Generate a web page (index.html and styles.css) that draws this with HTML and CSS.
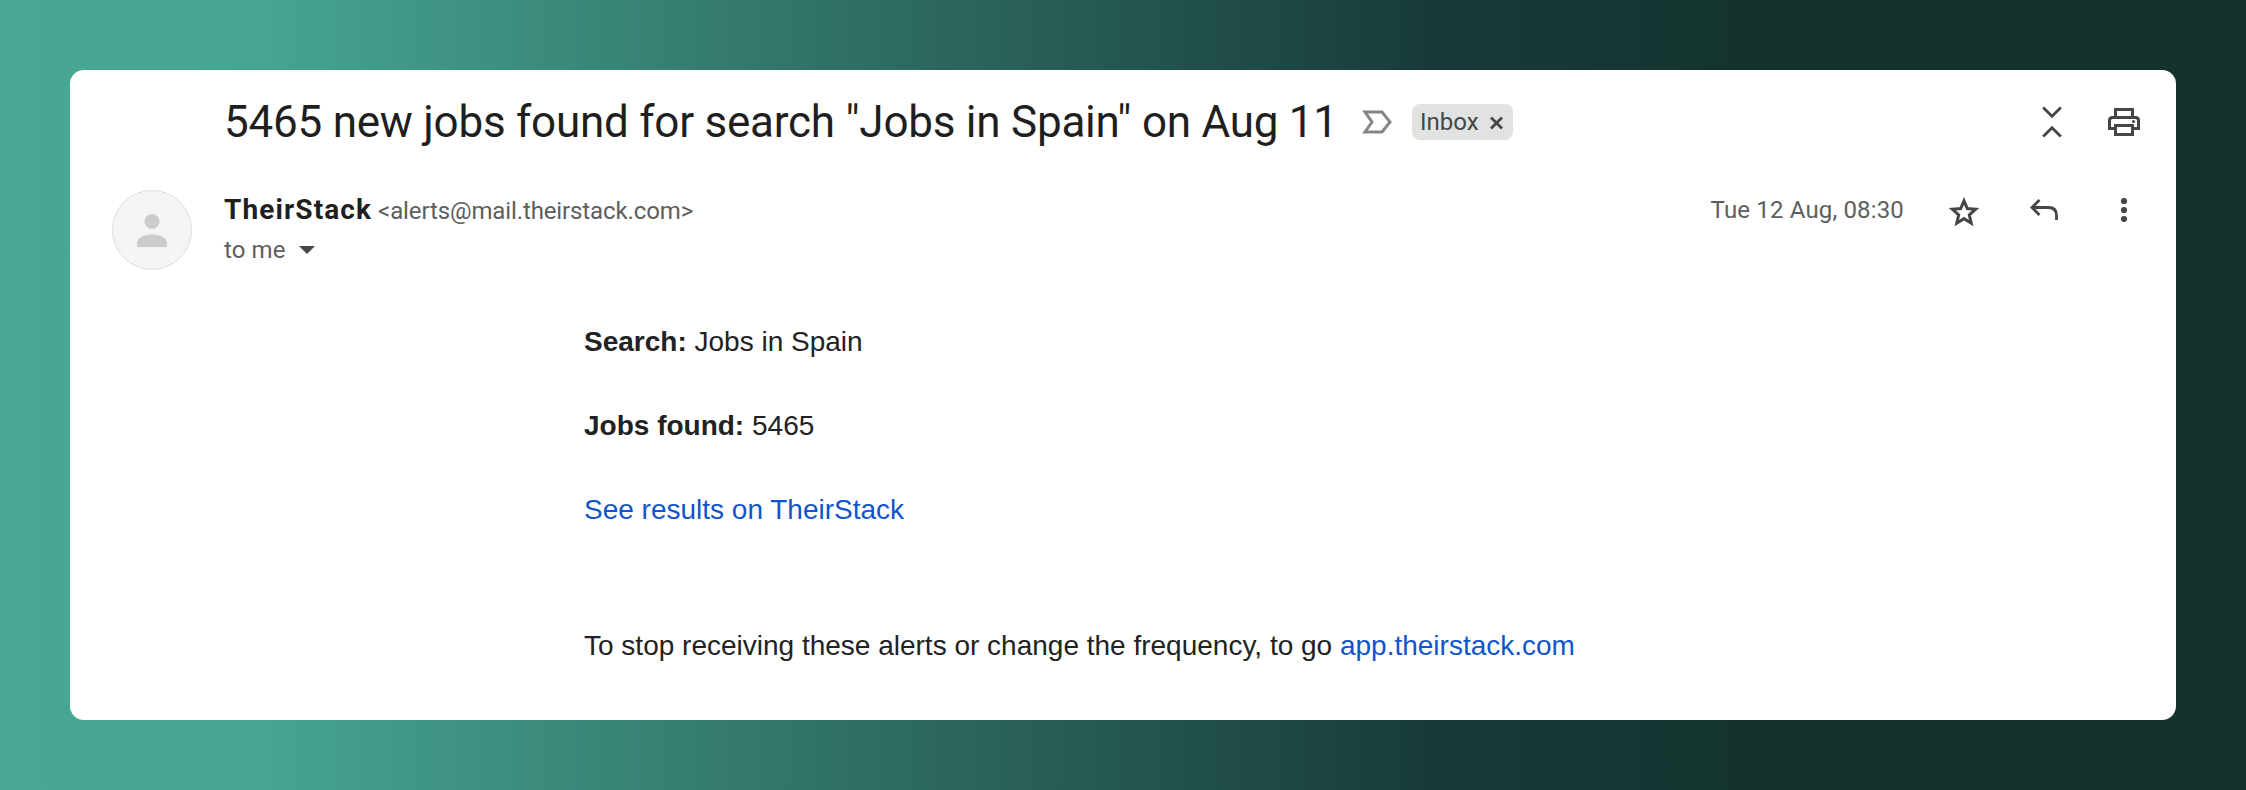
FILE: index.html
```html
<!DOCTYPE html>
<html lang="en">
<head>
    <meta charset="UTF-8">
    <meta name="viewport" content="width=device-width, initial-scale=1.0">
    <title>5465 new jobs found</title>
    <link rel="stylesheet" href="styles.css">
</head>
<body>
    <div class="mail-card">
        <!-- Subject row -->
        <div class="subject-row">
            <h1 class="subject">5465 new jobs found for search "Jobs in Spain" on Aug 11</h1>
            <svg class="important" width="30" height="24" viewBox="0 0 30 24">
                <path d="M3 2h17l8 10-8 10H3l7-10z" fill="none" stroke="#858585" stroke-width="3"/>
            </svg>
            <div class="chip">
                <span class="chip-text">Inbox</span>
                <svg width="15" height="15" viewBox="0 0 15 15">
                    <path d="M2 2.500l11 11M13 2.500l-11 11" stroke="#444746" stroke-width="2.800"/>
                </svg>
            </div>
            <div class="subject-actions">
                <svg width="20" height="32" viewBox="0 0 20 32">
                    <path d="M1.2 1.4l8.8 8.8 8.8-8.8M1.2 30.6l8.8-8.8 8.8 8.8" fill="none" stroke="#444746" stroke-width="2.8"/>
                </svg>
                <svg width="32" height="28" viewBox="0 0 32 28">
                    <path d="M7.500 9V1.500h17V9M7.500 20.500h-6V12.500q0-3 3-3h23q3 0 3 3v8h-6" fill="none" stroke="#444746" stroke-width="3"/>
                    <path d="M7.500 17.500h17v9h-17z" fill="none" stroke="#444746" stroke-width="3"/>
                    <circle cx="25.500" cy="13.500" r="1.600" fill="#444746"/>
                </svg>
            </div>
        </div>

        <!-- Sender row -->
        <div class="sender-row">
            <div class="avatar">
                <svg width="30" height="33" viewBox="0 0 30 33">
                    <circle cx="15" cy="7.500" r="7.500" fill="#ccc"/>
                    <path d="M0 33v-4c0-6 8-8.500 15-8.500s15 2.500 15 8.500v4z" fill="#ccc"/>
                </svg>
            </div>
            <div class="sender">
                <div class="from">
                    <span class="name">TheirStack</span>
                    <span class="email">&lt;alerts@mail.theirstack.com&gt;</span>
                </div>
                <div class="to">
                    <span class="to-text">to me</span>
                    <svg width="16" height="8" viewBox="0 0 16 8"><path d="M0 0h16l-8 8z" fill="#444746"/></svg>
                </div>
            </div>
            <div class="sender-actions">
                <span class="date">Tue 12 Aug, 08:30</span>
                <svg class="star" width="32" height="30" viewBox="0 0 32 30">
                    <path d="M16 3.800l3.300 7.800 8.300.7-6.300 5.500 1.900 8.200-7.200-4.400-7.200 4.400 1.900-8.200-6.300-5.500 8.300-.7z" fill="none" stroke="#444746" stroke-width="3"/>
                </svg>
                <svg class="reply" width="28" height="24" viewBox="0 0 28 24">
                    <path d="M9.500 2L2 9.500 9.500 17M2 9.500h16.500q8 0 8 8v4.500" fill="none" stroke="#444746" stroke-width="2.800"/>
                </svg>
                <svg class="more" width="8" height="24" viewBox="0 0 8 24">
                    <circle cx="4" cy="3" r="3.100" fill="#444746"/>
                    <circle cx="4" cy="12" r="3.100" fill="#444746"/>
                    <circle cx="4" cy="21" r="3.100" fill="#444746"/>
                </svg>
            </div>
        </div>

        <!-- Message -->
        <div class="message">
            <p class="line-search"><b>Search:</b> Jobs in Spain</p>
            <p class="line-found"><b>Jobs found:</b> 5465</p>
            <p class="line-results"><a href="#">See results on TheirStack</a></p>
            <p class="footer">To stop receiving these alerts or change the frequency, to go <a href="#">app.theirstack.com</a></p>
        </div>
    </div>
</body>
</html>
```
FILE: styles.css
```css
body {
    margin: 0;
    height: 790px;
    padding: 70px;
    box-sizing: border-box;
    background: linear-gradient(90deg, #48a692 0%, #47a692 11%, #183b39 63.500%, #14332f 78%, #14332f 100%);
    font-family: Roboto, 'Liberation Sans', sans-serif;
}
svg {
    display: block;
    flex-shrink: 0;
}
.mail-card {
    height: 650px;
    background-color: #fff;
    border-radius: 14px;
    box-sizing: border-box;
    padding: 24px 36px 0 42px;
}
.subject-row {
    display: flex;
    align-items: center;
    height: 56px;
    padding-left: 112px;
}
.subject {
    margin: 0;
    width: 1138px;
    font-size: 44px;
    line-height: 56px;
    font-weight: 400;
    letter-spacing: -0.24px;
    color: #1f1f1f;
    white-space: nowrap;
}
.chip {
    display: flex;
    align-items: center;
    box-sizing: border-box;
    width: 101px;
    height: 36px;
    margin-left: 20px;
    padding: 0 9px 0 8px;
    border-radius: 8px;
    background-color: #e1e3e1;
    color: #444746;
    font-size: 24px;
}
.chip-text {
    width: 69px;
}
.subject-actions {
    display: flex;
    align-items: center;
    gap: 46px;
    margin-left: auto;
}
.sender-row {
    display: flex;
    align-items: flex-start;
    margin-top: 40px;
}
.avatar {
    display: flex;
    align-items: center;
    justify-content: center;
    width: 80px;
    height: 80px;
    box-sizing: border-box;
    border: 1px solid #dedede;
    border-radius: 50%;
    background-color: #f5f5f5;
}
.sender {
    margin-left: 32px;
    color: #5e5e5e;
    font-size: 24px;
}
.from {
    display: flex;
    align-items: baseline;
    gap: 6px;
    height: 40px;
    line-height: 39px;
}
.name {
    font-size: 28px;
    font-weight: 700;
    letter-spacing: 1.1px;
    color: #1f1f1f;
}
.email {
    letter-spacing: -0.12px;
}
.to {
    display: flex;
    align-items: center;
    height: 40px;
    gap: 13px;
}
.to-text {
    letter-spacing: 0.1px;
}
.sender-actions {
    display: flex;
    align-items: center;
    height: 40px;
    margin-left: auto;
    padding-right: 12px;
    color: #5e5e5e;
    font-size: 24px;
}
.date {
    letter-spacing: 0.16px;
}
.star {
    margin: 3px 0 0 44px;
}
.reply {
    margin-left: 50px;
}
.more {
    margin-left: 62px;
}
.message {
    margin: 51px 0 0 472px;
    font-family: 'Liberation Sans', Arial, sans-serif;
    font-size: 28px;
    line-height: 42px;
    color: #222;
}
.message p {
    margin: 0 0 42px;
    white-space: nowrap;
}
.message .footer {
    margin-top: 94px;
}
.message a {
    color: #1155cc;
    text-decoration: none;
}
```
